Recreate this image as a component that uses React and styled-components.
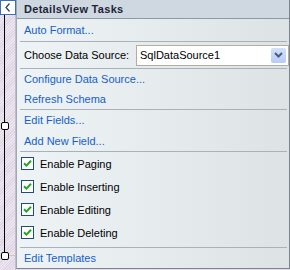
import styled, { createGlobalStyle } from "styled-components";

const GlobalStyle = createGlobalStyle`
  html, body {
    margin: 0;
    padding: 0;
    background: #e4dcea;
  }
  body {
    font-family: "Liberation Sans", Arial, sans-serif;
    font-size: 11px;
  }
`;

const Page = styled.div`
  display: flex;
  width: 290px;
  height: 270px;
  overflow: hidden;
`;

const Strip = styled.div`
  position: relative;
  width: 15px;
  flex: none;
  background: repeating-linear-gradient(
    135deg,
    #ede6f0 0px,
    #ede6f0 1px,
    #dfd5e5 1px,
    #dfd5e5 2px
  );
  border-right: 1px solid #c2bbc8;
`;

const Collapse = styled.div`
  position: absolute;
  left: 0;
  top: 0;
  width: 14px;
  height: 13px;
  border: 1px solid #3e6fbd;
  background: #fff;
  display: flex;
  align-items: center;
  justify-content: center;
  z-index: 2;
`;

const Rail = styled.div`
  position: absolute;
  left: 4px;
  top: 15px;
  width: 1px;
  height: 241px;
  background: #000;
`;

const GuideLine = styled.div`
  position: absolute;
  left: 0;
  top: 255px;
  width: 15px;
  height: 1px;
  background: #d9c6b4;
`;

const Handle = styled.div`
  position: absolute;
  left: 1px;
  top: ${(p) => p.$top}px;
  width: 6px;
  height: 6px;
  border: 1px solid #000;
  border-radius: 2px;
  background: #fff;
`;

const Panel = styled.div`
  width: 272px;
  height: 268px;
  flex: none;
  display: flex;
  flex-direction: column;
  border-left: 1px solid #a2a9b3;
  border-right: 1px solid #7d848d;
  border-bottom: 1px solid #7d848d;
  background: linear-gradient(to right, #eef3f6 0%, #e6ebee 50%, #dde2e5 100%);
`;

const Header = styled.div`
  height: 18px;
  line-height: 18px;
  padding-left: 7px;
  font-weight: bold;
  letter-spacing: 0.3px;
  color: #1d2538;
  background: #cfd7e1;
  border-bottom: 1px solid #8d99a8;
`;

const Row = styled.div`
  display: flex;
  align-items: center;
  height: ${(p) => p.$h}px;
  padding-left: 7px;
  color: #000;
`;

const Link = styled.a`
  color: #1660c9;
  text-decoration: none;
  cursor: pointer;
`;

const Separator = styled.div`
  height: 1px;
  margin: 0 2px 0 3px;
  background: #a9b1bb;
`;

const Label = styled.span`
  width: 112px;
  flex: none;
`;

const Select = styled.div`
  display: flex;
  align-items: center;
  width: 148px;
  height: 19px;
  border: 1px solid #b3ae9c;
  background: #fff;
  padding-left: 3px;
  box-sizing: content-box;
`;

const SelectText = styled.span`
  flex: 1;
`;

const ArrowButton = styled.div`
  width: 15px;
  height: 15px;
  margin-right: 2px;
  border-radius: 2px;
  background: linear-gradient(to bottom, #d4e0fb, #b8cbf5);
  display: flex;
  align-items: center;
  justify-content: center;
`;

const CheckRow = styled.label`
  display: flex;
  align-items: center;
  gap: 6px;
  height: 23px;
  padding-left: 4px;
  color: #000;
`;

const Box = styled.span`
  width: 11px;
  height: 11px;
  border: 1px solid #1f4c7c;
  background: #fff;
  display: flex;
  align-items: center;
  justify-content: center;
`;

const CheckSection = styled.div`
  display: flex;
  flex-direction: column;
  padding-bottom: 3px;
`;

const Check = () => (
  <Box>
    <svg width="9" height="9" viewBox="0 0 9 9">
      <path d="M1 4.2 L3.4 6.6 L8 1.8" fill="none" stroke="#21a621" strokeWidth="2" />
    </svg>
  </Box>
);

const options = ["Enable Paging", "Enable Inserting", "Enable Editing", "Enable Deleting"];

export default function App() {
  return (
    <Page>
      <GlobalStyle />
      <Strip>
        <Collapse>
          <svg width="6" height="9" viewBox="0 0 6 9">
            <path d="M4.5 0.5 L1 4.5 L4.5 8.5" fill="none" stroke="#2b3a57" strokeWidth="1.2" />
          </svg>
        </Collapse>
        <Rail />
        <GuideLine />
        <Handle $top={122} />
        <Handle $top={252} />
      </Strip>
      <Panel>
        <Header>DetailsView Tasks</Header>
        <Row $h={22}>
          <Link>Auto Format...</Link>
        </Row>
        <Separator />
        <Row $h={26}>
          <Label>Choose Data Source:</Label>
          <Select>
            <SelectText>SqlDataSource1</SelectText>
            <ArrowButton>
              <svg width="9" height="6" viewBox="0 0 9 6">
                <path d="M1 1 L4.5 4.5 L8 1" fill="none" stroke="#4a5d82" strokeWidth="2" />
              </svg>
            </ArrowButton>
          </Select>
        </Row>
        <Separator />
        <Row $h={20}>
          <Link>Configure Data Source...</Link>
        </Row>
        <Row $h={20}>
          <Link>Refresh Schema</Link>
        </Row>
        <Separator />
        <Row $h={20}>
          <Link>Edit Fields...</Link>
        </Row>
        <Row $h={21}>
          <Link>Add New Field...</Link>
        </Row>
        <Separator />
        <CheckSection>
          {options.map((o) => (
            <CheckRow key={o}>
              <Check />
              {o}
            </CheckRow>
          ))}
        </CheckSection>
        <Separator />
        <Row $h={20}>
          <Link>Edit Templates</Link>
        </Row>
      </Panel>
    </Page>
  );
}
